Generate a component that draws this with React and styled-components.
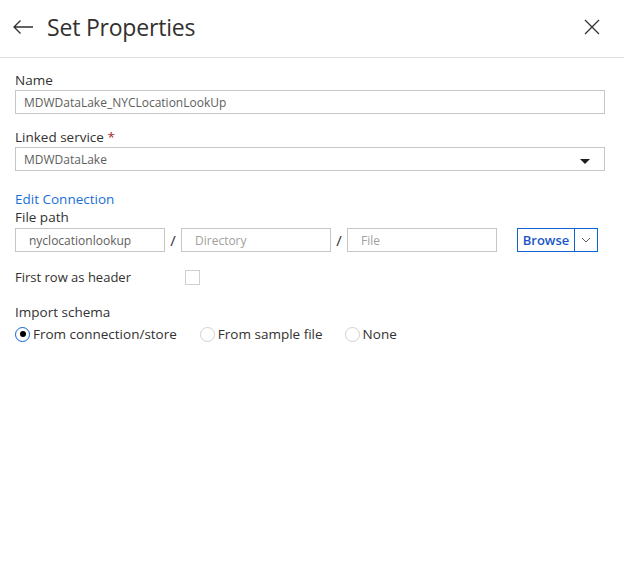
import React from 'react'
import styled, { createGlobalStyle } from 'styled-components'

const GlobalStyle = createGlobalStyle`
  html, body {
    margin: 0;
    padding: 0;
    background: #fff;
  }
  body {
    font-family: 'Open Sans', 'Noto Sans', sans-serif;
    color: #323130;
  }
`

const Panel = styled.div`
  width: 624px;
  height: 580px;
  background: #fff;
`

const Header = styled.div`
  height: 58px;
  display: flex;
  align-items: center;
  padding: 0 24px 0 12px;
  border-bottom: 1px solid #e1dfdd;
  box-sizing: border-box;
  padding-bottom: 4px;
`

const IconButton = styled.button`
  border: 0;
  background: none;
  padding: 0;
  display: flex;
  align-items: center;
  justify-content: center;
  color: #323130;
  cursor: pointer;
`

const Title = styled.h1`
  margin: 0 0 0 13px;
  font-size: 23px;
  font-weight: 400;
  letter-spacing: -0.2px;
  flex: 1;
  color: #323130;
`

const Body = styled.div`
  padding: 14px 19px 0 15px;
`

const Field = styled.div`
  margin-bottom: ${p => p.gap || 15}px;
`

const Label = styled.div`
  font-size: 13.5px;
  line-height: 17px;
  color: #323130;
  margin-bottom: 1px;
`

const Required = styled.span`
  color: #a4262c;
`

const Input = styled.div`
  height: 24px;
  box-sizing: border-box;
  border: 1px solid #c8c6c4;
  display: flex;
  align-items: center;
  padding-left: ${p => p.pad || 8}px;
  font-size: 12px;
  color: ${p => (p.placeholder ? '#a19f9d' : '#605e5c')};
  width: ${p => (p.w ? p.w + 'px' : 'auto')};
  position: relative;
`

const Caret = styled.span`
  position: absolute;
  right: 14px;
  top: 11px;
  width: 0;
  height: 0;
  border-left: 5px solid transparent;
  border-right: 5px solid transparent;
  border-top: 5px solid #201f1e;
`

const Link = styled.a`
  display: block;
  font-size: 13.5px;
  line-height: 17px;
  color: #1a6fd8;
  text-decoration: none;
  margin-bottom: 1px;
`

const PathRow = styled.div`
  display: flex;
  align-items: center;
  margin-top: 2px;
`

const Slash = styled.span`
  width: 16px;
  text-align: center;
  font-size: 15px;
  color: #323130;
`

const SplitButton = styled.div`
  margin-left: 20px;
  height: 24px;
  box-sizing: border-box;
  border: 1px solid #0f62d0;
  display: flex;
`

const BrowseLabel = styled.span`
  width: 56px;
  font-size: 13px;
  font-weight: 600;
  color: #1a56c7;
  display: flex;
  align-items: center;
  justify-content: center;
  border-right: 1px solid #0f62d0;
`

const Chevron = styled.span`
  width: 22px;
  display: flex;
  align-items: center;
  justify-content: center;
`

const CheckRow = styled.div`
  display: flex;
  align-items: center;
  margin-top: 16px;
  font-size: 13px;
`

const Checkbox = styled.span`
  width: 15px;
  height: 15px;
  box-sizing: border-box;
  border: 1px solid #d2d0ce;
  margin-left: 54px;
`

const SchemaField = styled.div`
  margin-top: 18px;
`

const RadioGroup = styled.div`
  display: flex;
  align-items: center;
  margin-top: 4px;
`

const RadioItem = styled.label`
  display: flex;
  align-items: center;
  font-size: 13.5px;
  color: #323130;
  margin-right: ${p => p.mr || 0}px;
`

const RadioCircle = styled.span`
  width: 15px;
  height: 15px;
  box-sizing: border-box;
  border-radius: 50%;
  border: 1px solid ${p => (p.checked ? '#0f62d0' : '#d2d0ce')};
  display: flex;
  align-items: center;
  justify-content: center;
  margin-right: 3px;
  &::after {
    content: '';
    display: ${p => (p.checked ? 'block' : 'none')};
    width: 6px;
    height: 6px;
    border-radius: 50%;
    background: #000;
  }
`

const App = () => (
  <Panel>
    <GlobalStyle />
    <Header>
      <IconButton aria-label="Back">
        <svg width="22" height="16" viewBox="0 0 22 16" fill="none" stroke="#323130" strokeWidth="1.3">
          <path d="M21 8H2M8.5 1.5L2 8l6.5 6.5" />
        </svg>
      </IconButton>
      <Title>Set Properties</Title>
      <IconButton aria-label="Close">
        <svg width="16" height="16" viewBox="0 0 16 16" fill="none" stroke="#323130" strokeWidth="1.3">
          <path d="M1 1l14 14M15 1L1 15" />
        </svg>
      </IconButton>
    </Header>
    <Body>
      <Field>
        <Label>Name</Label>
        <Input>MDWDataLake_NYCLocationLookUp</Input>
      </Field>
      <Field gap={20}>
        <Label>
          Linked service <Required>*</Required>
        </Label>
        <Input>
          MDWDataLake
          <Caret />
        </Input>
      </Field>
      <Link href="#">Edit Connection</Link>
      <Label>File path</Label>
      <PathRow>
        <Input w={150} pad={13}>nyclocationlookup</Input>
        <Slash>/</Slash>
        <Input w={150} pad={13} placeholder>Directory</Input>
        <Slash>/</Slash>
        <Input w={150} pad={13} placeholder>File</Input>
        <SplitButton>
          <BrowseLabel>Browse</BrowseLabel>
          <Chevron>
            <svg width="10" height="6" viewBox="0 0 10 6" fill="none" stroke="#605e5c" strokeWidth="1">
              <path d="M1 1l4 4 4-4" />
            </svg>
          </Chevron>
        </SplitButton>
      </PathRow>
      <CheckRow>
        First row as header
        <Checkbox />
      </CheckRow>
      <SchemaField>
        <Label>Import schema</Label>
        <RadioGroup>
          <RadioItem mr={23}>
            <RadioCircle checked />
            From connection/store
          </RadioItem>
          <RadioItem mr={22}>
            <RadioCircle />
            From sample file
          </RadioItem>
          <RadioItem>
            <RadioCircle />
            None
          </RadioItem>
        </RadioGroup>
      </SchemaField>
    </Body>
  </Panel>
)

export default App
